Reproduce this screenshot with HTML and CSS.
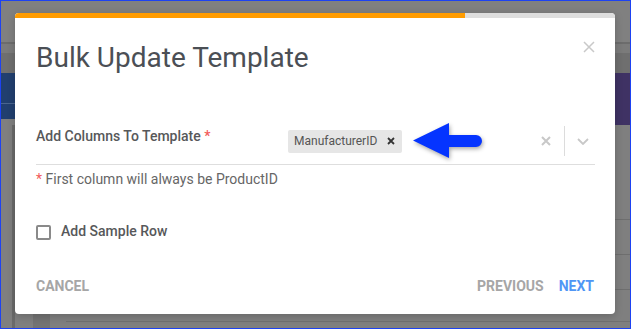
FILE: index.html
```html
<!DOCTYPE html>
<html lang="en">
<head>
    <meta charset="UTF-8">
    <meta name="viewport" content="width=device-width, initial-scale=1.0">
    <title>Bulk Update Template</title>
    <link rel="stylesheet" href="styles.css">
</head>
<body>
    <div class="frame">
        <!-- page behind the overlay -->
        <div class="page">
            <div class="topbar"></div>
            <div class="topline"></div>
            <div class="subbar"></div>
            <div class="toolbar"></div>
            <div class="band">
                <div class="band-left"></div>
                <div class="band-mid"></div>
                <div class="band-right"></div>
            </div>
            <div class="content">
                <div class="rail"></div>
                <div class="rail-edge"></div>
                <div class="main">
                    <div class="row row-tall"></div>
                    <div class="row"></div>
                    <div class="row"></div>
                    <div class="row row-last">
                        <div class="cell-dark"></div>
                        <div class="cell-line"></div>
                    </div>
                </div>
            </div>
        </div>

        <!-- dialog -->
        <div class="modal">
            <div class="progress"><div class="progress-fill"></div></div>
            <div class="modal-body">
                <div class="modal-header">
                    <h2 class="modal-title">Bulk Update Template</h2>
                    <svg class="close-icon" width="12" height="12" viewBox="0 0 12 12">
                        <path d="M1 1 L11 11 M11 1 L1 11" stroke="#c9c9c9" stroke-width="1.5" fill="none"/>
                    </svg>
                </div>

                <div class="field">
                    <label class="field-label">Add Columns To Template <span class="req">*</span></label>
                    <div class="select">
                        <div class="values">
                            <span class="tag">ManufacturerID
                                <svg class="tag-x" width="8" height="8" viewBox="0 0 8 8">
                                    <path d="M1 1 L7 7 M7 1 L1 7" stroke="#333" stroke-width="1.8" fill="none"/>
                                </svg>
                            </span>
                        </div>
                        <div class="indicator clear">
                            <svg width="10" height="10" viewBox="0 0 10 10">
                                <path d="M1 1 L9 9 M9 1 L1 9" stroke="#c8c8c8" stroke-width="2" fill="none"/>
                            </svg>
                        </div>
                        <span class="sep"></span>
                        <div class="indicator chevron">
                            <svg width="12" height="7" viewBox="0 0 12 7">
                                <path d="M1 1 L6 6 L11 1" stroke="#c8c8c8" stroke-width="1.8" fill="none"/>
                            </svg>
                        </div>
                    </div>
                </div>
                <p class="helper"><span class="req">*</span> First column will always be ProductID</p>

                <label class="check-row">
                    <span class="checkbox"></span>
                    <span class="check-text">Add Sample Row</span>
                </label>

                <div class="footer">
                    <button class="btn btn-muted">CANCEL</button>
                    <div class="footer-right">
                        <button class="btn btn-muted">PREVIOUS</button>
                        <button class="btn btn-primary">NEXT</button>
                    </div>
                </div>
            </div>

            <!-- annotation arrow -->
            <svg class="arrow" width="74" height="40" viewBox="0 0 74 40">
                <path d="M0 17.5 L36 0 L36 12 L63 12 A6 6 0 0 1 63 24 L36 24 L36 35 Z" fill="#0534ff"/>
            </svg>
        </div>
    </div>
</body>
</html>
```

FILE: styles.css
```css
body {
    margin: 0;
    font-family: Roboto, "Liberation Sans", Arial, sans-serif;
}
.frame {
    position: relative;
    width: 631px;
    height: 329px;
    box-sizing: border-box;
    border: 1px solid #1d42f2;
    background-color: #7f7f7f;
    overflow: hidden;
}

/* background page */
.page {
    display: flex;
    flex-direction: column;
    height: 100%;
}
.topbar {
    height: 41px;
    background-color: #808080;
}
.topline {
    height: 2px;
    background-color: #6c6c6c;
}
.subbar {
    height: 9px;
    background-color: #7b7b7b;
}
.toolbar {
    height: 20px;
    background-color: #6f6f6f;
}
.band {
    display: flex;
    align-items: flex-start;
    height: 52px;
}
.band-left {
    width: 14px;
    height: 30px;
    background-color: #213f6f;
    border-bottom: 1px solid #4a6590;
    box-shadow: 0 15px 0 #213f6f;
}
.band-mid {
    flex: 1;
}
.band-right {
    width: 15px;
    height: 52px;
    background-color: #3f3264;
}
.content {
    display: flex;
    flex: 1;
}
.rail {
    width: 11px;
    background-color: #7f7f7f;
}
.rail-edge {
    width: 3px;
    background-color: #6a6a6a;
}
.main {
    flex: 1;
    display: flex;
    flex-direction: column;
}
.row {
    height: 34px;
    border-bottom: 1px solid #6e6e6e;
}
.row-tall {
    height: 94px;
}
.row-last {
    flex: 1;
    border-bottom: none;
    display: flex;
    align-items: flex-end;
}
.cell-dark {
    width: 17px;
    margin-left: 18px;
    height: 100%;
    background-color: #737373;
}
.cell-line {
    flex: 1;
    margin-left: 16px;
    margin-bottom: 6px;
    border-bottom: 1px solid #707070;
}

/* dialog */
.modal {
    position: absolute;
    left: 14px;
    top: 12px;
    width: 600px;
    height: 301px;
    background-color: #fff;
    border-radius: 4px;
    overflow: hidden;
    box-shadow: 0 2px 8px rgba(0, 0, 0, 0.2);
}
.progress {
    height: 5px;
    background-color: #dedede;
}
.progress-fill {
    width: 450px;
    height: 100%;
    background-color: #ff9c00;
}
.modal-body {
    padding: 24px 21px 0 21px;
}
.modal-header {
    display: flex;
    justify-content: space-between;
    align-items: flex-start;
}
.modal-title {
    margin: 0;
    font-size: 28px;
    line-height: 32px;
    font-weight: 400;
    color: #4b4f55;
}
.close-icon {
    margin-top: -1px;
    margin-right: -1px;
}
.field {
    display: flex;
    margin-top: 50px;
    margin-right: -1px;
    padding-bottom: 6px;
    border-bottom: 1px solid #dedede;
}
.field-label {
    width: 252px;
    padding-top: 3px;
    font-size: 14px;
    line-height: 18px;
    font-weight: 500;
    color: #57585a;
}
.req {
    color: #f25c5c;
}
.select {
    flex: 1;
    display: flex;
    align-items: center;
    height: 34px;
}
.values {
    flex: 1;
}
.tag {
    display: inline-flex;
    align-items: center;
    gap: 10px;
    height: 23px;
    padding: 0 7px 0 6px;
    background-color: #e6e6e6;
    border-radius: 2px;
    font-size: 12px;
    color: #555;
}
.indicator {
    display: flex;
    align-items: center;
    justify-content: center;
}
.clear {
    width: 20px;
    margin-right: 8px;
}
.sep {
    width: 1px;
    height: 30px;
    background-color: #dcdcdc;
}
.chevron {
    width: 24px;
    margin-left: 6px;
}
.helper {
    margin: 4px 0 0;
    font-size: 14px;
    line-height: 20px;
    color: #666;
}
.check-row {
    display: flex;
    align-items: center;
    gap: 10px;
    margin-top: 32px;
    line-height: 20px;
}
.checkbox {
    width: 11px;
    height: 11px;
    margin-top: 3px;
    border: 2px solid #8a8a8a;
    border-radius: 2px;
}
.check-text {
    font-size: 14px;
    font-weight: 500;
    color: #57585a;
}
.footer {
    display: flex;
    justify-content: space-between;
    margin-top: 35px;
}
.footer-right {
    display: flex;
    gap: 15px;
}
.btn {
    padding: 0;
    border: none;
    background: none;
    font-family: inherit;
    font-size: 14px;
    line-height: 20px;
    font-weight: 700;
    cursor: pointer;
}
.btn-muted {
    color: #a6a6a6;
}
.btn-primary {
    color: #5096f5;
}
.arrow {
    position: absolute;
    left: 398px;
    top: 110px;
    filter: drop-shadow(1px 2px 2px rgba(0, 0, 0, 0.35));
}
```
